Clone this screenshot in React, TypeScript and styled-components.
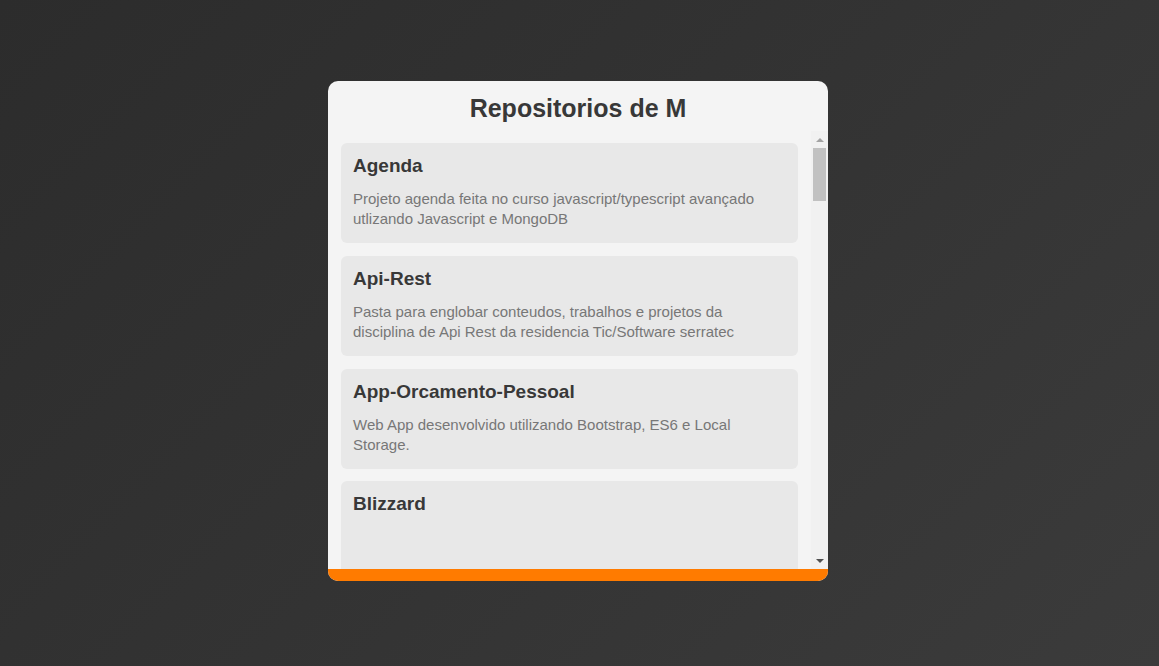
import styled, { createGlobalStyle } from 'styled-components';

interface IRepo {
  name: string;
  description?: string;
}

const repos: IRepo[] = [
  {
    name: 'Agenda',
    description: 'Projeto agenda feita no curso javascript/typescript avançado utlizando Javascript e MongoDB',
  },
  {
    name: 'Api-Rest',
    description:
      'Pasta para englobar conteudos, trabalhos e projetos da disciplina de Api Rest da residencia Tic/Software serratec',
  },
  {
    name: 'App-Orcamento-Pessoal',
    description: 'Web App desenvolvido utilizando Bootstrap, ES6 e Local Storage.',
  },
  { name: 'Blizzard' },
];

const GlobalStyle = createGlobalStyle`
  html, body {
    margin: 0;
    padding: 0;
  }

  body {
    font-family: 'Liberation Sans', Arial, sans-serif;
  }

  * {
    box-sizing: border-box;
  }
`;

const Page = styled('main')`
  height: 100vh;
  display: flex;
  align-items: center;
  justify-content: center;
  padding: 0 3px 4px 0;
  background: linear-gradient(135deg, #2c2c2c 0%, #333333 50%, #3b3b3b 100%);
`;

const Card = styled('section')`
  width: 500px;
  height: 500px;
  display: flex;
  flex-direction: column;
  background: #f4f4f4;
  border-radius: 10px;
  overflow: hidden;
`;

const Header = styled('header')`
  height: 50px;
  flex-shrink: 0;
  padding-top: 13px;
  text-align: center;

  h1 {
    margin: 0;
    font-size: 25px;
    font-weight: 700;
    color: #383838;
  }
`;

const Body = styled('div')`
  flex: 1;
  min-height: 0;
  display: flex;
`;

const RepoList = styled('ul')`
  flex: 1;
  min-width: 0;
  margin: 0;
  padding: 12px 13px 0 13px;
  list-style: none;
  overflow: hidden;
`;

const RepoItem = styled('li')`
  height: 100px;
  margin-bottom: 12.8px;
  padding: 12px;
  background: #e8e8e8;
  border-radius: 6px;

  h3 {
    margin: 0 0 12px;
    font-size: 19px;
    font-weight: 700;
    color: #383838;
  }

  p {
    margin: 0;
    font-size: 15px;
    line-height: 20px;
    color: #777777;
  }
`;

const Scrollbar = styled('div')`
  width: 17px;
  flex-shrink: 0;
  display: flex;
  flex-direction: column;
  background: #f1f1f1;
`;

const ScrollButton = styled('div')<{ $dir: 'up' | 'down' }>`
  height: 17px;
  flex-shrink: 0;
  display: flex;
  align-items: center;
  justify-content: center;

  &::before {
    content: '';
    width: 0;
    height: 0;
    border-left: 4px solid transparent;
    border-right: 4px solid transparent;
    ${({ $dir }) =>
      $dir === 'up' ? 'border-bottom: 4px solid #a3a3a3;' : 'border-top: 4px solid #505050;'}
  }
`;

const ScrollTrack = styled('div')`
  flex: 1;
  padding: 0 2px;
`;

const ScrollThumb = styled('div')`
  height: 53px;
  background: #c1c1c1;
`;

const Footer = styled('footer')`
  height: 12px;
  flex-shrink: 0;
  background: #ff7b00;
`;

const App = () => {
  return (
    <>
      <GlobalStyle />
      <Page>
        <Card>
          <Header>
            <h1>Repositorios de M</h1>
          </Header>
          <Body>
            <RepoList>
              {repos.map((repo) => (
                <RepoItem key={repo.name}>
                  <h3>{repo.name}</h3>
                  {repo.description && <p>{repo.description}</p>}
                </RepoItem>
              ))}
            </RepoList>
            <Scrollbar>
              <ScrollButton $dir="up" />
              <ScrollTrack>
                <ScrollThumb />
              </ScrollTrack>
              <ScrollButton $dir="down" />
            </Scrollbar>
          </Body>
          <Footer />
        </Card>
      </Page>
    </>
  );
};

export default App;
